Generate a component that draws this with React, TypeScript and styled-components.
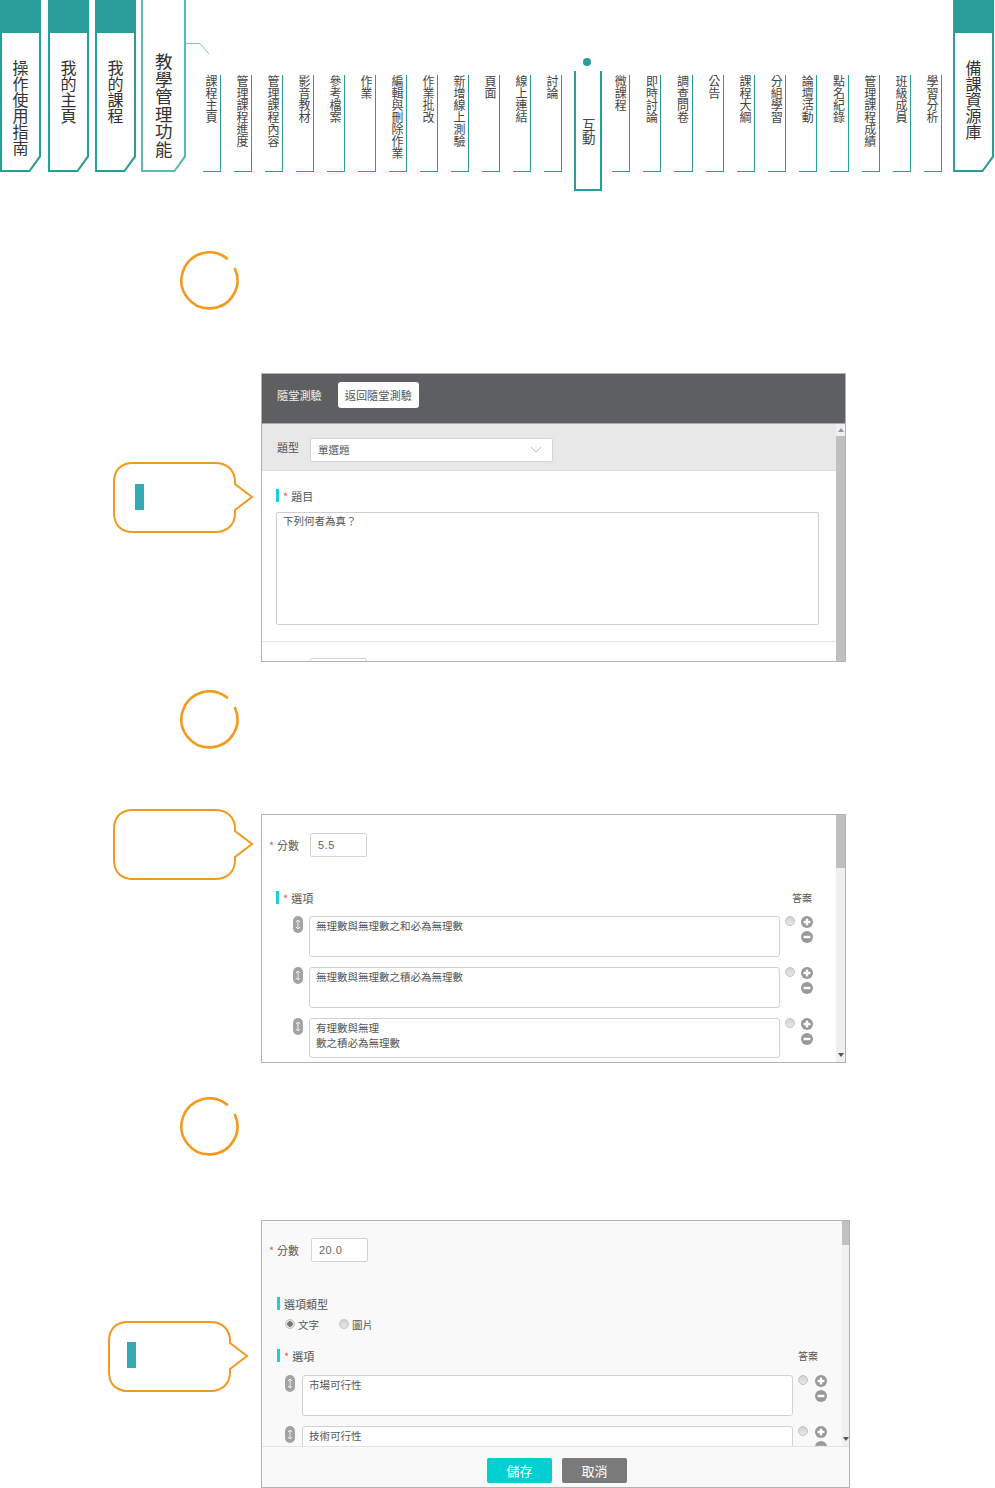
import React from "react";
import styled, { createGlobalStyle } from "styled-components";

const Global = createGlobalStyle`
  html, body { margin: 0; padding: 0; background: #fff; }
  body { font-family: "Noto Sans CJK TC", "Noto Sans", sans-serif; color: #555; }
  * { box-sizing: border-box; }
`;

const TEAL = "#2a9d9a";
const ORANGE = "#f39a1e";

const Page = styled.div`
  width: 995px;
  height: 1488px;
  overflow: hidden;
  display: flex;
  flex-direction: column;
`;

/* ---------- top navigation ---------- */
const Nav = styled.nav`
  position: relative;
  display: flex;
  align-items: flex-start;
  height: 192px;
  flex: none;
`;

const VText = styled.span`
  display: block;
  writing-mode: vertical-rl;
  text-orientation: upright;
  white-space: nowrap;
`;

const Tab = styled.div<{ $w: number; $ml: number; $light?: boolean }>`
  flex: none;
  width: ${(p) => p.$w}px;
  height: 172px;
  margin-left: ${(p) => p.$ml}px;
  padding: ${(p) => (p.$light ? 0 : 33)}px 2px 2px 2px;
  background: ${(p) => (p.$light ? "#5fb8b5" : TEAL)};
  clip-path: polygon(0 0, 100% 0, 100% calc(100% - 15px), calc(100% - 11px) 100%, 0 100%);
`;

const TabFace = styled.div<{ $light?: boolean }>`
  height: 100%;
  background: #fff;
  clip-path: polygon(0 0, 100% 0, 100% calc(100% - 14px), calc(100% - 10px) 100%, 0 100%);
  display: flex;
  justify-content: center;
  align-items: flex-start;
  padding-top: ${(p) => (p.$light ? 53 : 27)}px;
  color: #333;
  font-size: ${(p) => (p.$light ? 17.5 : 16)}px;
  line-height: 1;
`;

const SubItem = styled.div<{ $ml?: number; $w?: number }>`
  flex: none;
  width: ${(p) => p.$w ?? 18}px;
  height: 97px;
  margin-top: 75px;
  margin-left: ${(p) => p.$ml ?? 13}px;
  padding-right: 3px;
  border-right: 1px solid ${TEAL};
  border-bottom: 1px solid ${TEAL};
  display: flex;
  justify-content: flex-end;
  color: #444;
  font-size: 12px;
  line-height: 12px;
`;

const ActiveItem = styled.div`
  position: relative;
  flex: none;
  width: 28px;
  height: 120px;
  margin-top: 71px;
  margin-left: 12px;
  padding-top: 47px;
  border: 2px solid ${TEAL};
  border-top: none;
  display: flex;
  justify-content: center;
  color: #444;
  font-size: 13.5px;
  line-height: 1;
  &::before {
    content: "";
    position: absolute;
    left: 7px;
    top: -13px;
    width: 8px;
    height: 8px;
    border-radius: 50%;
    background: ${TEAL};
  }
`;

const Connector = styled.svg`
  position: absolute;
  left: 186px;
  top: 42px;
`;

/* ---------- step circles and callouts ---------- */
const StepRing = styled.svg<{ $mt: number }>`
  display: block;
  flex: none;
  margin-left: 180px;
  margin-top: ${(p) => p.$mt}px;
`;

const Row = styled.section<{ $mt: number; $h: number }>`
  display: flex;
  align-items: flex-start;
  flex: none;
  height: ${(p) => p.$h}px;
  margin-top: ${(p) => p.$mt}px;
`;

const CalloutBox = styled.div<{ $ml: number; $mt: number; $gap: number }>`
  position: relative;
  flex: none;
  width: 141px;
  height: 71px;
  margin-left: ${(p) => p.$ml}px;
  margin-top: ${(p) => p.$mt}px;
  margin-right: ${(p) => p.$gap}px;
`;

const CalloutMark = styled.span<{ $x: number; $y: number }>`
  position: absolute;
  left: ${(p) => p.$x}px;
  top: ${(p) => p.$y}px;
  width: 9px;
  height: 26px;
  background: #35aab3;
`;

const Callout = ({
  ml,
  mt,
  gap,
  mark,
}: {
  ml: number;
  mt: number;
  gap: number;
  mark?: [number, number];
}) => (
  <CalloutBox $ml={ml} $mt={mt} $gap={gap}>
    <svg width="141" height="71" viewBox="0 0 141 71" fill="none">
      <path
        d="M20 1 H102 C114 1 122 8 122 20 V22 L139 35 L122 48 V51 C122 63 114 70 102 70 H20 C8 70 1 63 1 51 V20 C1 8 8 1 20 1 Z"
        stroke={ORANGE}
        strokeWidth="2"
      />
    </svg>
    {mark && <CalloutMark $x={mark[0]} $y={mark[1]} />}
  </CalloutBox>
);

/* ---------- panels ---------- */
const Panel = styled.div<{ $w: number; $h: number; $bg?: string }>`
  flex: none;
  width: ${(p) => p.$w}px;
  height: ${(p) => p.$h}px;
  border: 1px solid #b2b2b2;
  background: ${(p) => p.$bg ?? "#fff"};
  display: flex;
  flex-direction: column;
  overflow: hidden;
`;

const DarkHeader = styled.div`
  flex: none;
  height: 50px;
  background: #5e5f61;
  border-bottom: 1px solid #aaa;
  display: flex;
  align-items: center;
  gap: 16px;
  padding: 0 0 7px 15px;
  color: #f2f2f2;
  font-size: 11.2px;
`;

const BackButton = styled.div`
  width: 81px;
  height: 26px;
  background: #fff;
  border-radius: 3px;
  color: #555;
  display: flex;
  align-items: center;
  justify-content: center;
`;

const Split = styled.div`
  flex: 1;
  min-height: 0;
  display: flex;
`;

const Body = styled.div`
  flex: 1;
  min-width: 0;
  overflow: hidden;
`;

const Scrollbar = styled.div<{ $w: number; $track: string; $thumbTop: number; $thumbH: number }>`
  position: relative;
  flex: none;
  width: ${(p) => p.$w}px;
  background: ${(p) => p.$track};
  &::before {
    content: "";
    position: absolute;
    left: 0;
    right: 0;
    top: ${(p) => p.$thumbTop}px;
    height: ${(p) => p.$thumbH}px;
    background: #c0c0c0;
  }
`;

const Arrow = styled.span<{ $dir: "up" | "down"; $offset: number }>`
  position: absolute;
  left: 50%;
  margin-left: -3px;
  ${(p) => (p.$dir === "up" ? `top: ${p.$offset}px;` : `bottom: ${p.$offset}px;`)}
  width: 0;
  height: 0;
  border-left: 3px solid transparent;
  border-right: 3px solid transparent;
  ${(p) => (p.$dir === "up" ? "border-bottom: 4px solid #999;" : "border-top: 4px solid #555;")}
`;

const TypeBar = styled.div`
  height: 47px;
  background: #e8e8e8;
  border-bottom: 1px solid #dcdcdc;
  display: flex;
  align-items: center;
  padding: 0 0 0 15px;
  gap: 11px;
  font-size: 11px;
`;

const Select = styled.div`
  width: 243px;
  height: 24px;
  margin-top: 5px;
  background: #fff;
  border: 1px solid #d4d4d4;
  border-radius: 2px;
  display: flex;
  align-items: center;
  justify-content: space-between;
  padding: 0 10px 0 7px;
  font-size: 10.5px;
  color: #555;
`;

const FieldLabel = styled.div<{ $pt: number; $pl?: number; $fs?: number }>`
  display: flex;
  align-items: center;
  height: 13px;
  margin-top: ${(p) => p.$pt}px;
  padding-left: ${(p) => p.$pl ?? 14}px;
  font-size: ${(p) => p.$fs ?? 11}px;
  color: #555;
  gap: 4px;
`;

const LabelBar = styled.i`
  width: 3px;
  height: 13px;
  background: #14d3d8;
  flex: none;
`;

const Star = styled.b`
  color: #f25555;
  font-weight: 400;
  font-size: 11px;
  margin-right: -1px;
`;

const ScoreStar = styled(Star)`
  display: block;
  flex: none;
  width: 8px;
  margin-right: 0;
`;

const Question = styled.div`
  width: 543px;
  height: 113px;
  margin: 10px 0 0 14px;
  border: 1px solid #cfcfcf;
  border-radius: 2px;
  background: #fff;
  padding: 0 6px;
  font-size: 10.5px;
  line-height: 16px;
`;

const Divider = styled.div`
  height: 1px;
  margin-top: 16px;
  background: #e6e6e6;
`;

const Input = styled.div`
  width: 57px;
  height: 24px;
  flex: none;
  background: #fff;
  border: 1px solid #d4d4d4;
  border-radius: 2px;
  padding-left: 7px;
  font-size: 11px;
  line-height: 22px;
  letter-spacing: 0.5px;
  font-family: "Liberation Sans", sans-serif;
  color: #666;
`;

const ClippedInput = styled(Input)`
  margin-left: 48px;
  margin-top: 16px;
`;

const ScoreRow = styled.div<{ $mt: number }>`
  display: flex;
  align-items: center;
  height: 24px;
  margin-top: ${(p) => p.$mt}px;
  padding-left: 7px;
  font-size: 11px;
`;

const ScoreLabel = styled.span<{ $w: number }>`
  width: ${(p) => p.$w}px;
  flex: none;
`;

const AnswerHead = styled.div`
  display: flex;
  align-items: center;
  justify-content: space-between;
  padding-right: 24px;
`;

const OptionRow = styled.div<{ $h: number; $mt: number; $pl: number; $w: number; $rg: number }>`
  display: grid;
  grid-template-columns: ${(p) => p.$pl}px ${(p) => p.$w}px ${(p) => p.$rg}px 12px;
  height: ${(p) => p.$h}px;
  margin-top: ${(p) => p.$mt}px;
`;

const Handle = styled.span<{ $mr: number }>`
  justify-self: end;
  width: 10px;
  height: 17px;
  margin-right: ${(p) => p.$mr}px;
  border-radius: 5px;
  background: #a3a3a3;
  display: flex;
  align-items: center;
  justify-content: center;
`;

const OptionBox = styled.div<{ $h: number }>`
  height: ${(p) => p.$h}px;
  background: #fff;
  border: 1px solid #d2d2d2;
  border-radius: 3px;
  padding: 1px 6px;
  font-size: 10.5px;
  line-height: 15px;
  color: #555;
`;

const RadioDot = styled.span<{ $on?: boolean }>`
  display: block;
  flex: none;
  width: 10px;
  height: 10px;
  border-radius: 50%;
  border: 1px solid #c2c2c2;
  background: ${(p) =>
    p.$on ? "radial-gradient(circle, #777 0 2.5px, #e2e2e2 3px)" : "linear-gradient(#d2d2d2, #e8e8e8)"};
`;

const RadioCell = styled.div`
  padding-left: 5px;
`;

const Tools = styled.div`
  display: flex;
  flex-direction: column;
  gap: 3px;
`;

const ToolIcon = styled.svg`
  display: block;
  flex: none;
`;

const CircleIcon = ({ plus }: { plus?: boolean }) => (
  <ToolIcon width="12" height="12" viewBox="0 0 12 12">
    <circle cx="6" cy="6" r="6" fill="#999" />
    <rect x="2.6" y="4.8" width="6.8" height="2.4" fill="#fff" />
    {plus && <rect x="4.8" y="2.6" width="2.4" height="6.8" fill="#fff" />}
  </ToolIcon>
);

const Updown = () => (
  <svg width="6" height="11" viewBox="0 0 6 11" fill="none">
    <path d="M3 1 V10 M1 3 L3 1 L5 3 M1 8 L3 10 L5 8" stroke="#eee" strokeWidth="1" />
  </svg>
);

const RadioLine = styled.div`
  display: flex;
  align-items: center;
  height: 12px;
  margin-top: 8px;
  padding-left: 23px;
  font-size: 10.5px;
  color: #555;
`;

const RadioText = styled.span<{ $gap?: number }>`
  margin-left: 3px;
  margin-right: ${(p) => p.$gap ?? 0}px;
`;

const Footer = styled.div`
  flex: none;
  height: 41px;
  border-top: 1px solid #e2e2e2;
  display: flex;
  justify-content: center;
  gap: 10px;
  padding: 11px 0 0 3px;
`;

const FootButton = styled.div<{ $bg: string }>`
  width: 65px;
  height: 25px;
  border-radius: 2px;
  background: ${(p) => p.$bg};
  color: #fff;
  font-size: 13px;
  display: flex;
  align-items: center;
  justify-content: center;
`;

const Ring = ({ mt }: { mt: number }) => (
  <StepRing $mt={mt} width="60" height="60" viewBox="0 0 60 60" fill="none">
    <path
      d="M55 18 A28 28 0 1 1 47 7.6"
      stroke={ORANGE}
      strokeWidth="2.6"
      strokeLinecap="round"
    />
  </StepRing>
);

const Option = ({
  lines,
  h,
  mt,
  pl,
  w,
  rg,
  hm,
}: {
  lines: string[];
  h: number;
  mt: number;
  pl: number;
  w: number;
  rg: number;
  hm: number;
}) => (
  <OptionRow $h={h} $mt={mt} $pl={pl} $w={w} $rg={rg}>
    <Handle $mr={hm}>
      <Updown />
    </Handle>
    <OptionBox $h={h}>
      {lines.map((l) => (
        <div key={l}>{l}</div>
      ))}
    </OptionBox>
    <RadioCell>
      <RadioDot />
    </RadioCell>
    <Tools>
      <CircleIcon plus />
      <CircleIcon />
    </Tools>
  </OptionRow>
);

const subA = ["課程主頁", "管理課程進度", "管理課程內容", "影音教材", "參考檔案", "作業", "編輯與刪除作業", "作業批改", "新增線上測驗", "頁面", "線上連結", "討論"];
const subB = ["微課程", "即時討論", "調查問卷", "公告", "課程大綱", "分組學習", "論壇活動", "點名紀錄", "管理課程成績", "班級成員", "學習分析"];

export default function App() {
  return (
    <Page>
      <Global />
      <Nav>
        <Tab $w={41} $ml={0}>
          <TabFace>
            <VText>操作使用指南</VText>
          </TabFace>
        </Tab>
        <Tab $w={41} $ml={7}>
          <TabFace>
            <VText>我的主頁</VText>
          </TabFace>
        </Tab>
        <Tab $w={41} $ml={6}>
          <TabFace>
            <VText>我的課程</VText>
          </TabFace>
        </Tab>
        <Tab $w={45} $ml={5} $light>
          <TabFace $light>
            <VText>教學管理功能</VText>
          </TabFace>
        </Tab>
        <Connector width="24" height="14" viewBox="0 0 24 14" fill="none">
          <path d="M0 1.5 H14 L23 12" stroke="#7cc6c4" strokeWidth="1" />
        </Connector>
        {subA.map((s, i) => (
          <SubItem key={s} $ml={i === 0 ? 17 : 13}>
            <VText>{s}</VText>
          </SubItem>
        ))}
        <ActiveItem>
          <VText>互動</VText>
        </ActiveItem>
        {subB.map((s, i) => (
          <SubItem key={s} $ml={i === 0 ? 10 : 13} $w={18.2}>
            <VText>{s}</VText>
          </SubItem>
        ))}
        <Tab $w={41} $ml={11}>
          <TabFace>
            <VText>備課資源庫</VText>
          </TabFace>
        </Tab>
      </Nav>

      <Ring mt={59} />

      <Row $mt={62} $h={289}>
        <Callout ml={113} mt={89} gap={7} mark={[22, 22]} />
        <Panel $w={585} $h={289}>
          <DarkHeader>
            <span>隨堂測驗</span>
            <BackButton>返回隨堂測驗</BackButton>
          </DarkHeader>
          <Split>
            <Body>
              <TypeBar>
                <span>題型</span>
                <Select>
                  單選題
                  <svg width="12" height="7" viewBox="0 0 12 7" fill="none">
                    <path d="M1 1 L6 6 L11 1" stroke="#bbb" strokeWidth="1" />
                  </svg>
                </Select>
              </TypeBar>
              <FieldLabel $pt={18}>
                <LabelBar />
                <Star>*</Star>
                題目
              </FieldLabel>
              <Question>下列何者為真？</Question>
              <Divider />
              <ClippedInput />
            </Body>
            <Scrollbar $w={9} $track="#f0f0f0" $thumbTop={12} $thumbH={240}>
              <Arrow $dir="up" $offset={4} />
            </Scrollbar>
          </Split>
        </Panel>
      </Row>

      <Ring mt={28} />

      <Row $mt={64} $h={249}>
        <Callout ml={113} mt={-5} gap={7} />
        <Panel $w={585} $h={249}>
          <Split>
            <Body>
              <ScoreRow $mt={18}>
                <ScoreStar>*</ScoreStar>
                <ScoreLabel $w={33}>分數</ScoreLabel>
                <Input>5.5</Input>
              </ScoreRow>
              <AnswerHead>
                <FieldLabel $pt={34}>
                  <LabelBar />
                  <Star>*</Star>
                  選項
                </FieldLabel>
                <FieldLabel $pt={34} $pl={0} $fs={10}>
                  答案
                </FieldLabel>
              </AnswerHead>
              <Option lines={["無理數與無理數之和必為無理數"]} h={41} mt={12} pl={47} w={471} rg={21} hm={6} />
              <Option lines={["無理數與無理數之積必為無理數"]} h={41} mt={10} pl={47} w={471} rg={21} hm={6} />
              <Option lines={["有理數與無理", "數之積必為無理數"]} h={40} mt={10} pl={47} w={471} rg={21} hm={6} />
            </Body>
            <Scrollbar $w={9} $track="#f0f0f0" $thumbTop={0} $thumbH={53}>
              <Arrow $dir="down" $offset={5} />
            </Scrollbar>
          </Split>
        </Panel>
      </Row>

      <Ring mt={34} />

      <Row $mt={63} $h={268}>
        <Callout ml={108} mt={101} gap={12} mark={[19, 21]} />
        <Panel $w={589} $h={268} $bg="#f9f9f9">
          <Split>
            <Body>
              <ScoreRow $mt={17}>
                <ScoreStar>*</ScoreStar>
                <ScoreLabel $w={34}>分數</ScoreLabel>
                <Input>20.0</Input>
              </ScoreRow>
              <FieldLabel $pt={35} $pl={15}>
                <LabelBar />
                選項類型
              </FieldLabel>
              <RadioLine>
                <RadioDot $on />
                <RadioText $gap={20}>文字</RadioText>
                <RadioDot />
                <RadioText>圖片</RadioText>
              </RadioLine>
              <AnswerHead>
                <FieldLabel $pt={19} $pl={15}>
                  <LabelBar />
                  <Star>*</Star>
                  選項
                </FieldLabel>
                <FieldLabel $pt={19} $pl={0} $fs={10}>
                  答案
                </FieldLabel>
              </AnswerHead>
              <Option lines={["市場可行性"]} h={41} mt={13} pl={40} w={491} rg={22} hm={7} />
              <Option lines={["技術可行性"]} h={41} mt={10} pl={40} w={491} rg={22} hm={7} />
            </Body>
            <Scrollbar $w={7} $track="#f0f0f0" $thumbTop={0} $thumbH={24}>
              <Arrow $dir="down" $offset={5} />
            </Scrollbar>
          </Split>
          <Footer>
            <FootButton $bg="#00cfd3">儲存</FootButton>
            <FootButton $bg="#7a7a7a">取消</FootButton>
          </Footer>
        </Panel>
      </Row>
    </Page>
  );
}
